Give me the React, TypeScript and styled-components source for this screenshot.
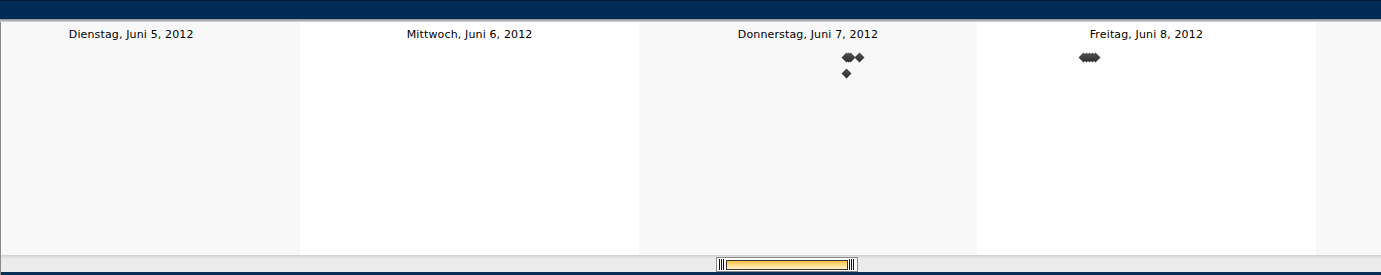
import React from 'react';
import styled, { createGlobalStyle } from 'styled-components';

const GlobalStyle = createGlobalStyle`
  html, body {
    margin: 0;
    padding: 0;
    background: #ffffff;
  }
`;

const Timeline = styled.div`
  width: 1381px;
  height: 275px;
  overflow: hidden;
  display: flex;
  flex-direction: column;
  font-family: 'DejaVu Sans', Verdana, sans-serif;
  font-size: 11px;
  letter-spacing: 0.14px;
  color: #000;
`;

const TopBar = styled.div`
  height: 19px;
  flex: none;
  background: #002b57;
  border-top: 1px solid #001a38;
  box-sizing: border-box;
`;

const TopShadow = styled.div`
  height: 3px;
  flex: none;
  background: linear-gradient(#8a8a8a, #b8b8b8 60%, #dcdcdc);
`;

const BandArea = styled.div`
  position: relative;
  flex: 1;
  display: flex;
  border-left: 1px solid #8a8a8a;
  overflow: hidden;
`;

const DayRow = styled.div`
  display: flex;
  margin-left: -39px;
`;

const Day = styled.div<{ $shaded: boolean }>`
  flex: none;
  width: 338.4px;
  height: 100%;
  background: ${(p) => (p.$shaded ? '#f8f8f8' : '#ffffff')};
  text-align: center;
  padding-top: 6px;
  box-sizing: border-box;
  line-height: 13px;
  white-space: nowrap;
`;

const Marker = styled.svg`
  position: absolute;
  width: 11px;
  height: 11px;
`;

const BottomBar = styled.div`
  height: 20px;
  flex: none;
  box-sizing: border-box;
  border-left: 1px solid #8a8a8a;
  background: linear-gradient(#cfcfcf, #dedede 2px, #ececec 4px, #ececec 17px, #0d2f52 17px, #002b57);
  display: flex;
  justify-content: center;
  padding-top: 2px;
  padding-left: 192px;
`;

const Scroller = styled.div`
  width: 142px;
  height: 15px;
  box-sizing: border-box;
  border: 1px solid #8c8c8c;
  background: #fff;
  display: flex;
  align-items: center;
  padding: 0 2px;
  gap: 1px;
`;

const Grip = styled.div`
  width: 6px;
  height: 11px;
  flex: none;
  background: repeating-linear-gradient(90deg, #111 0 1px, #fff 1px 2px);
`;

const Thumb = styled.div`
  flex: 1;
  height: 10px;
  box-sizing: border-box;
  border: 1px solid #333;
  background: linear-gradient(#ffbe45, #ffdb86 50%, #fff0c8);
`;

// the last band only shows its left part, its label is off screen
const days = [
  'Dienstag, Juni 5, 2012',
  'Mittwoch, Juni 6, 2012',
  'Donnerstag, Juni 7, 2012',
  'Freitag, Juni 8, 2012',
  '',
];

// event markers: center x,y within the band area
const events = [
  { x: 846, y: 35 },
  { x: 848, y: 35 },
  { x: 850, y: 35 },
  { x: 859, y: 35 },
  { x: 846, y: 51 },
  { x: 1083, y: 35 },
  { x: 1086, y: 35 },
  { x: 1089, y: 35 },
  { x: 1092, y: 35 },
  { x: 1095, y: 35 },
];

const Diamond: React.FC<{ x: number; y: number }> = ({ x, y }) => (
  <Marker viewBox="0 0 11 11" style={{ left: x - 5.5, top: y - 5.5 }}>
    <defs>
      <linearGradient id="dg" x1="0" y1="0" x2="0" y2="1">
        <stop offset="0" stopColor="#505050" />
        <stop offset="1" stopColor="#2e2e2e" />
      </linearGradient>
    </defs>
    <polygon points="5.5,0.5 10.5,5.5 5.5,10.5 0.5,5.5" fill="url(#dg)" />
  </Marker>
);

export default function App() {
  return (
    <Timeline>
      <GlobalStyle />
      <TopBar />
      <TopShadow />
      <BandArea>
        <DayRow>
          {days.map((d, i) => (
            <Day key={i} $shaded={i % 2 === 0}>
              {d}
            </Day>
          ))}
        </DayRow>
        {events.map((e, i) => (
          <Diamond key={i} x={e.x - 1} y={e.y} />
        ))}
      </BandArea>
      <BottomBar>
        <Scroller>
          <Grip />
          <Thumb />
          <Grip />
        </Scroller>
      </BottomBar>
    </Timeline>
  );
}
